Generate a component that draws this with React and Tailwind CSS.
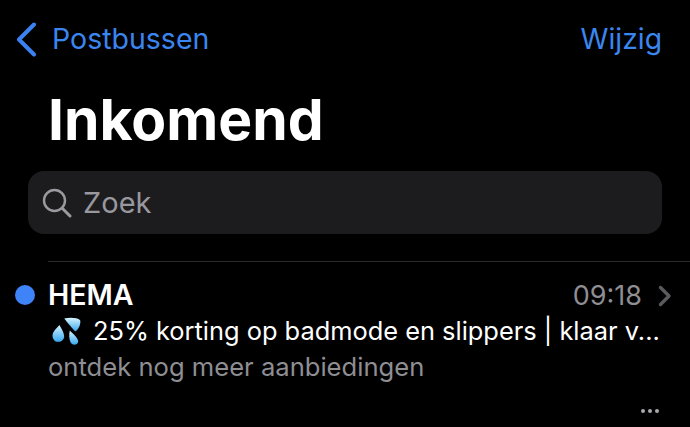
import React from "react";

const Drops = () => (
  <svg width="30" height="29" viewBox="0 0 32 30" className="shrink-0 ml-[4px]">
    <defs>
      <linearGradient id="d" x1="0" y1="0" x2="0" y2="1">
        <stop offset="0" stopColor="#d4f4ff" />
        <stop offset="1" stopColor="#38a8f0" />
      </linearGradient>
    </defs>
    <path d="M13 1 C19 0 27 0 30 3 C31 6 29 12 25 15 C22 12 17 6 13 1Z" fill="url(#d)" />
    <path d="M8 8 C10 12 13 16 13 21 C12 26 6 27 3 25 C0 22 0 18 2 15 C4 12 6 10 8 8Z" fill="url(#d)" />
    <path d="M19 14 C22 17 28 22 28 26 C27 30 22 30 20 27 C18 23 18 18 19 14Z" fill="url(#d)" />
  </svg>
);

export default function App() {
  return (
    <div className="w-[690px] h-[427px] overflow-hidden bg-black font-['Inter','Liberation_Sans',sans-serif]">
      <header className="flex items-center justify-between h-[78px] pl-[16px] pr-[28px]">
        <div className="flex items-center gap-[15px]">
          <svg width="21" height="35" viewBox="0 0 21 35" fill="none">
            <path d="M18 2.5 L3 17.5 L18 32.5" stroke="#3b82f0" strokeWidth="4" strokeLinecap="round" strokeLinejoin="round" />
          </svg>
          <span className="text-[28.5px] leading-none text-[#3b86ee]">Postbussen</span>
        </div>
        <span className="text-[28.3px] leading-none text-[#3b86ee]">Wijzig</span>
      </header>

      <h1 className="pl-[48px] mt-[11px] h-[62px] text-[57px] leading-[62px] font-bold text-white">Inkomend</h1>

      <div className="mx-[28px] mt-[20px] h-[63px] rounded-[16px] bg-[#1c1c1f] flex items-center pl-[14px] gap-[11px]">
        <svg width="30" height="30" viewBox="0 0 30 30" fill="none" stroke="#9a9a9f" strokeWidth="2.4" strokeLinecap="round">
          <circle cx="12.5" cy="12.5" r="10.5" />
          <path d="M20.5 20.5 L28 28" strokeWidth="3" />
        </svg>
        <span className="text-[29px] leading-none text-[#98989e]">Zoek</span>
      </div>

      <div className="ml-[48px] mt-[27px] h-px bg-[#2a2a2c]" />

      <section className="relative pl-[48px] pr-[18px] pt-[15px]">
        <span className="absolute left-[15px] top-[23px] w-[20px] h-[20px] rounded-full bg-[#3f83f8]" />
        <div className="flex items-center justify-between h-[35px] pt-[2px]">
          <span className="text-[28.5px] leading-none font-semibold text-white">HEMA</span>
          <div className="flex items-center gap-[16px]">
            <span className="text-[27px] leading-none text-[#8e8e93]">09:18</span>
            <svg width="14" height="22" viewBox="0 0 14 22" fill="none">
              <path d="M2.5 2.5 L11 11 L2.5 19.5" stroke="#5a5a5e" strokeWidth="3.4" strokeLinecap="round" strokeLinejoin="round" />
            </svg>
          </div>
        </div>
        <div className="flex items-center gap-[11px] h-[38px]">
          <Drops />
          <span className="text-[25.4px] leading-none text-white whitespace-nowrap">25% korting op badmode en slippers | klaar v...</span>
        </div>
        <p className="text-[25.6px] leading-[34px] text-[#8e8e93] whitespace-nowrap">ontdek nog meer aanbiedingen</p>
        <div className="flex justify-end gap-[3px] mt-[25px] pr-[13px]">
          <span className="w-[4px] h-[4px] rounded-full bg-[#a8a8ad]" />
          <span className="w-[4px] h-[4px] rounded-full bg-[#a8a8ad]" />
          <span className="w-[4px] h-[4px] rounded-full bg-[#a8a8ad]" />
        </div>
      </section>
    </div>
  );
}
